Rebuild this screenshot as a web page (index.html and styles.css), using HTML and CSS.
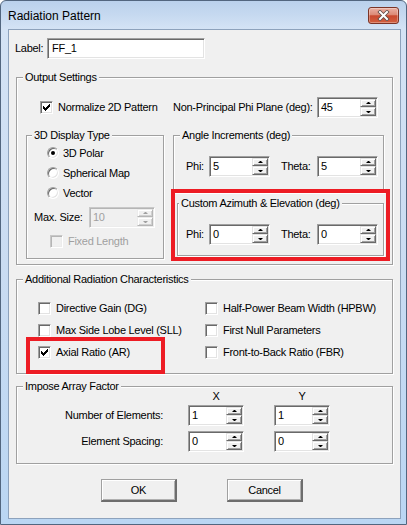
FILE: index.html
```html
<!DOCTYPE html>
<html lang="en">
<head>
<meta charset="utf-8">
<title>Radiation Pattern</title>
<link rel="stylesheet" href="styles.css">
</head>
<body>
<div class="window">
  <div class="titlebar">
    <div class="title">Radiation Pattern</div>
    <div class="close">
      <svg width="13" height="11" viewBox="0 0 13 11"><path class="x-outline" d="M3 2 L10 9 M10 2 L3 9"/><path class="x-fill" d="M3 2 L10 9 M10 2 L3 9"/></svg>
    </div>
  </div>
  <div class="client">
    <div class="label-row">
      <span class="label-text">Label:</span>
      <div class="textbox sunken">FF_1</div>
    </div>

    <div class="group output">
      <div class="gtitle">Output Settings</div>
      <div class="out-grid">
        <div class="normalize">
          <span class="check"><span class="box sunken"><svg class="tick" width="7" height="7" viewBox="0 0 7 7" shape-rendering="crispEdges"><path d="M0 2H1V3H2V4H3V3H4V2H5V1H6V0H7V3H6V4H5V5H4V6H3V7H2V6H1V5H0Z"/></svg></span>Normalize 2D Pattern</span>
        </div>
        <div class="npp">
          <span class="npp-label">Non-Principal Phi Plane (deg):</span>
          <div class="spin sunken"><span class="val">45</span><span class="btns"><span class="up"></span><span class="dn"></span></span></div>
        </div>

        <div class="group disp">
          <div class="gtitle">3D Display Type</div>
          <div class="radios">
            <div class="radio-row"><span class="radio on"></span>3D Polar</div>
            <div class="radio-row"><span class="radio"></span>Spherical Map</div>
            <div class="radio-row"><span class="radio"></span>Vector</div>
          </div>
          <div class="maxsize">
            <span class="ms-label">Max. Size:</span>
            <div class="spin sunken disabled ms-spin"><span class="val">10</span><span class="btns"><span class="up"></span><span class="dn"></span></span></div>
          </div>
          <div class="fixed">
            <span class="check disabled"><span class="box sunken"></span>Fixed Length</span>
          </div>
        </div>

        <div class="col2">
          <div class="group angle">
            <div class="gtitle">Angle Increments (deg)</div>
            <div class="ang-row">
              <span>Phi:</span>
              <div class="spin sunken"><span class="val">5</span><span class="btns"><span class="up"></span><span class="dn"></span></span></div>
              <span class="theta">Theta:</span>
              <div class="spin sunken"><span class="val">5</span><span class="btns"><span class="up"></span><span class="dn"></span></span></div>
            </div>
          </div>
          <div class="redbox">
            <div class="group custom">
              <div class="gtitle">Custom Azimuth &amp; Elevation (deg)</div>
              <div class="ang-row">
                <span>Phi:</span>
                <div class="spin sunken"><span class="val">0</span><span class="btns"><span class="up"></span><span class="dn"></span></span></div>
                <span class="theta">Theta:</span>
                <div class="spin sunken"><span class="val">0</span><span class="btns"><span class="up"></span><span class="dn"></span></span></div>
              </div>
            </div>
          </div>
        </div>
      </div>
    </div>

    <div class="group addl">
      <div class="gtitle">Additional Radiation Characteristics</div>
      <div class="addl-grid">
        <span class="check"><span class="box sunken"></span>Directive Gain (DG)</span>
        <span class="check"><span class="box sunken"></span>Half-Power Beam Width (HPBW)</span>
        <span class="check"><span class="box sunken"></span>Max Side Lobe Level (SLL)</span>
        <span class="check"><span class="box sunken"></span>First Null Parameters</span>
        <span class="check annotated"><span class="box sunken"><svg class="tick" width="7" height="7" viewBox="0 0 7 7" shape-rendering="crispEdges"><path d="M0 2H1V3H2V4H3V3H4V2H5V1H6V0H7V3H6V4H5V5H4V6H3V7H2V6H1V5H0Z"/></svg></span>Axial Ratio (AR)</span>
        <span class="check"><span class="box sunken"></span>Front-to-Back Ratio (FBR)</span>
      </div>
    </div>

    <div class="group impose">
      <div class="gtitle">Impose Array Factor</div>
      <div class="arr-row head"><span></span><span class="hd">X</span><span class="hd">Y</span></div>
      <div class="arr-row r1">
        <span class="lbl">Number of Elements:</span>
        <div class="spin sunken w56"><span class="val">1</span><span class="btns"><span class="up"></span><span class="dn"></span></span></div>
        <div class="spin sunken w56"><span class="val">1</span><span class="btns"><span class="up"></span><span class="dn"></span></span></div>
      </div>
      <div class="arr-row r2">
        <span class="lbl">Element Spacing:</span>
        <div class="spin sunken w56"><span class="val">0</span><span class="btns"><span class="up"></span><span class="dn"></span></span></div>
        <div class="spin sunken w56"><span class="val">0</span><span class="btns"><span class="up"></span><span class="dn"></span></span></div>
      </div>
    </div>

    <div class="buttons">
      <div class="btn">OK</div>
      <div class="btn">Cancel</div>
    </div>
  </div>
</div>
</body>
</html>
```

FILE: styles.css
```css
* { box-sizing: border-box; }
html, body { margin: 0; padding: 0; background: #fff; }
body {
  width: 407px; height: 525px; overflow: hidden;
  font-family: "Liberation Sans", Arial, sans-serif;
  font-size: 11px; line-height: 13px; color: #000;
  letter-spacing: -0.28px;
}

/* window frame */
.window {
  width: 407px; height: 525px;
  display: flex; flex-direction: column;
  border: 1px solid #52667f;
  border-radius: 6px 6px 0 0;
  background: linear-gradient(to bottom, #bad1ec 0, #c6d9f0 14px, #d4e3f5 28px, #cadcf2 50%, #bad6f3 100%);
}
.titlebar {
  height: 28px; flex: none;
  display: flex; justify-content: space-between; align-items: flex-start;
  padding: 0 7px 0 7px;
}
.title {
  font-family: "Liberation Sans", Arial, sans-serif;
  font-size: 12px; line-height: 14px; letter-spacing: 0;
  margin-top: 8px; color: #000;
}
.close {
  width: 31px; height: 17px; margin-top: 6px;
  border: 1px solid #7b3427; border-radius: 3px;
  background: linear-gradient(to bottom, #eab0a3 0%, #dc8a76 45%, #c9492f 52%, #d2603f 100%);
  box-shadow: inset 0 0 0 1px rgba(255,255,255,0.3);
  display: flex; align-items: center; justify-content: center;
}
.close svg path { fill: none; stroke-linecap: square; }
.close .x-outline { stroke: #5a4a48; stroke-width: 3.6; }
.close .x-fill { stroke: #fff; stroke-width: 2; }

.client {
  flex: 1;
  margin: 0 5px 5px 7px;
  border: 1px solid #8da2bc;
  background: #f0f0f0;
}

/* common controls */
.sunken {
  border: 1px solid;
  border-color: #a0a0a0 #fff #fff #a0a0a0;
  box-shadow: inset 1px 1px 0 #696969, inset -1px -1px 0 #e3e3e3;
  background: #fff;
}
.label-row {
  display: flex; align-items: center;
  height: 21px; margin: 8px 0 0 6px;
}
.label-text { width: 32px; }
.textbox {
  width: 158px; height: 21px;
  padding-left: 4px; line-height: 19px;
}

.spin {
  display: flex; width: 61px; height: 21px; padding: 1px;
}
.spin .val { flex: 1; padding-left: 2px; line-height: 17px; }
.spin .btns { width: 16px; display: flex; flex-direction: column; }
.spin .btns span {
  display: flex; align-items: center; justify-content: center;
  background: #f0f0f0;
  border: 1px solid;
  border-color: #e3e3e3 #696969 #696969 #e3e3e3;
  box-shadow: inset 1px 1px 0 #fff, inset -1px -1px 0 #a0a0a0;
}
.spin .btns .up { height: 8px; }
.spin .btns .dn { flex: 1; }
.spin .btns .up::before {
  content: ""; width: 1px; height: 0;
  border-left: 2px solid transparent; border-right: 2px solid transparent;
  border-bottom: 2px solid #000;
}
.spin .btns .dn::before {
  content: ""; width: 1px; height: 0;
  border-left: 2px solid transparent; border-right: 2px solid transparent;
  border-top: 2px solid #000;
}
.spin.disabled { background: #f0f0f0; border-color: #c8c8c8 #fff #fff #c8c8c8; box-shadow: inset 1px 1px 0 #b5b5b5, inset -1px -1px 0 #ececec; }
.spin.disabled .val { color: #a0a0a0; }
.spin.disabled .btns span { border-color: #ececec #b5b5b5 #b5b5b5 #ececec; box-shadow: inset 1px 1px 0 #fff, inset -1px -1px 0 #d0d0d0; }
.spin.disabled .btns .up::before { border-bottom-color: #a0a0a0; }
.spin.disabled .btns .dn::before { border-top-color: #a0a0a0; }
.spin.ms-spin { width: 66px; }
.spin.w56 { width: 56px; }

.check { display: flex; align-items: center; }
.box {
  width: 13px; height: 13px; flex: none; margin-right: 5px;
  display: flex; align-items: center; justify-content: center;
}
.tick { display: block; fill: #000; }
.check.disabled { color: #a0a0a0; }
.check.disabled .box { background: #f0f0f0; border-color: #c8c8c8 #fff #fff #c8c8c8; box-shadow: inset 1px 1px 0 #b5b5b5, inset -1px -1px 0 #ececec; }

.radio {
  width: 12px; height: 12px; flex: none; margin-right: 4px;
  border-radius: 50%;
  border: 1px solid; border-color: #a0a0a0 #fff #fff #a0a0a0;
  box-shadow: inset 1px 1px 0 #696969, inset -1px -1px 0 #e3e3e3;
  background: #fff;
  display: flex; align-items: center; justify-content: center;
}
.radio.on::after {
  content: ""; width: 4px; height: 4px; border-radius: 50%; background: #000;
}

/* group boxes */
.group {
  border: 1px solid #a0a0a0;
  box-shadow: inset 1px 1px 0 #fff, 1px 1px 0 #fff;
}
.gtitle {
  width: fit-content; height: 13px;
  margin: -7px 0 0 6px; padding: 0 2px;
  background: #f0f0f0; line-height: 13px;
  white-space: nowrap;
}
.client > .group { margin-left: 7px; margin-right: 7px; }

.output { margin-top: 18px; }
.out-grid {
  display: grid;
  grid-template-columns: 138px 211px;
  column-gap: 9px; row-gap: 17px;
  align-items: start;
  margin-top: 13px; padding: 0 0 3px 9px;
}
.normalize { height: 21px; display: flex; align-items: center; padding-left: 14px; }
.npp { display: flex; align-items: center; height: 21px; }
.npp-label { width: 144px; white-space: nowrap; }

.disp { padding-bottom: 7px; }
.disp .gtitle { margin-left: 5px; }
.radios { margin-top: 1px; padding-left: 20px; }
.radio-row { height: 20px; display: flex; align-items: center; }
.maxsize { margin-top: 4px; display: flex; align-items: center; padding-left: 7px; }
.ms-label { width: 55px; }
.fixed { margin-top: 3px; height: 20px; padding-left: 23px; display: flex; align-items: center; }

.col2 { display: flex; flex-direction: column; }
.ang-row {
  display: grid;
  grid-template-columns: 23px 61px 47px 61px;
  align-items: center;
  margin-top: 14px; padding: 0 0 15px 12px;
}
.ang-row .theta { padding-left: 11px; }
.redbox {
  margin: -4px -6px 0 -2px;
  border: 4px solid #ed1c24;
  padding: 10px 2px 1px 2px;
}
.custom .gtitle { margin-left: 1px; }
.custom .ang-row { padding: 0 0 10px 8px; }

.addl { margin-top: 14px; }
.addl-grid {
  display: grid;
  grid-template-columns: 167px 1fr;
  grid-auto-rows: 22px;
  margin-top: 11px; padding: 0 0 10px 21px;
  white-space: nowrap;
}
.annotated { position: relative; }
.annotated::after {
  content: ""; position: absolute;
  left: -12px; top: -4px; width: 131px; height: 29px;
  border: 4px solid #ed1c24;
}

.impose { margin-top: 12px; padding-bottom: 11px; }
.arr-row {
  display: grid;
  grid-template-columns: 171px 86px 56px;
  align-items: center;
}
.arr-row .lbl { text-align: right; padding-right: 25px; white-space: nowrap; }
.arr-row.head { margin-top: -3px; height: 13px; }
.arr-row .hd { width: 56px; text-align: center; }
.arr-row.r1 { margin-top: 2px; }
.arr-row.r2 { margin-top: 5px; }

.buttons { display: flex; gap: 50px; margin-top: 15px; padding-left: 92px; }
.btn {
  width: 76px; height: 23px;
  display: flex; align-items: center; justify-content: center;
  background: #f0f0f0;
  border-style: solid; border-width: 1px 2px 2px 1px;
  border-color: #a0a0a0 #6d6d6d #6d6d6d #a0a0a0;
  box-shadow: inset 1px 1px 0 #fff, inset -1px -1px 0 #b0b0b0;
}
```
